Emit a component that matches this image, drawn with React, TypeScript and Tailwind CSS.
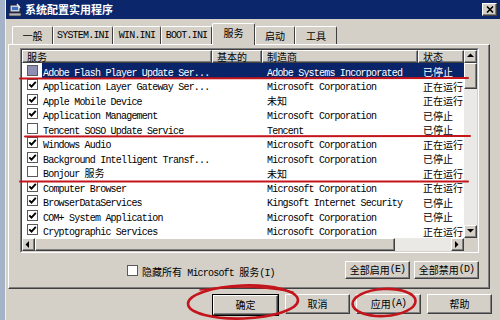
import React from "react";

const services = [
  { name: "Adobe Flash Player Update Ser...", maker: "Adobe Systems Incorporated", state: "已停止", on: false, sel: true },
  { name: "Application Layer Gateway Ser...", maker: "Microsoft Corporation", state: "正在运行", on: true },
  { name: "Apple Mobile Device", maker: "未知", state: "正在运行", on: true },
  { name: "Application Management", maker: "Microsoft Corporation", state: "已停止", on: true },
  { name: "Tencent SOSO Update Service", maker: "Tencent", state: "已停止", on: false },
  { name: "Windows Audio", maker: "Microsoft Corporation", state: "正在运行", on: true },
  { name: "Background Intelligent Transf...", maker: "Microsoft Corporation", state: "已停止", on: true },
  { name: "Bonjour 服务", maker: "未知", state: "正在运行", on: false },
  { name: "Computer Browser", maker: "Microsoft Corporation", state: "正在运行", on: true },
  { name: "BrowserDataServices", maker: "Kingsoft Internet Security", state: "已停止", on: true },
  { name: "COM+ System Application", maker: "Microsoft Corporation", state: "已停止", on: true },
  { name: "Cryptographic Services", maker: "Microsoft Corporation", state: "正在运行", on: true },
];

const tabs = [
  { label: "一般", w: "w-[41px]" },
  { label: "SYSTEM.INI", w: "w-[60px]" },
  { label: "WIN.INI", w: "w-[48px]" },
  { label: "BOOT.INI", w: "w-[51px]" },
  { label: "服务", w: "w-[43px]", active: true },
  { label: "启动", w: "w-[40px]" },
  { label: "工具", w: "w-[42px]" },
];

const CJK = /[\u2E80-\u9FFF\uFF00-\uFFEF]/;

// split text into latin / chinese runs so each gets its own font
function runs(s: string) {
  const out: { t: string; c: boolean }[] = [];
  for (const ch of s) {
    const c = CJK.test(ch);
    const last = out[out.length - 1];
    if (last && last.c === c) last.t += ch;
    else out.push({ t: ch, c });
  }
  return out;
}

function Txt({ s }: { s: string }) {
  return (
    <>
      {runs(s).map((r, i) =>
        r.c ? (
          <span key={i} className="font-['Noto_Sans_CJK_SC',sans-serif] text-[10px]">{r.t}</span>
        ) : (
          <span key={i} className="font-['Liberation_Mono',monospace] text-[10px] tracking-[-0.8px] whitespace-pre">{r.t}</span>
        )
      )}
    </>
  );
}

function Check({ on, sel }: { on?: boolean; sel?: boolean }) {
  return (
    <span className={`flex h-[11px] w-[11px] shrink-0 items-center justify-center border border-[#5a5a5a] ${sel ? "bg-[#8e8fb3]" : "bg-white"}`}>
      {on && (
        <svg width="9" height="9" viewBox="0 0 9 9">
          <path d="M1.3 4.3 L3.5 6.6 L7.8 1.8" stroke="#000" strokeWidth="1.9" fill="none" />
        </svg>
      )}
    </span>
  );
}

const raised = "border border-t-white border-l-white border-r-[#404040] border-b-[#404040] shadow-[inset_-1px_-1px_0_#808080]";

function Arrow({ dir }: { dir: "up" | "down" | "left" | "right" }) {
  const pts = { up: "1,5 4.5,1.5 8,5", down: "1,2 4.5,5.5 8,2", left: "5,1 1.5,4.5 5,8", right: "2,1 5.5,4.5 2,8" }[dir];
  return (
    <div className={`flex h-[13px] w-[13px] shrink-0 items-center justify-center bg-[#d4d0c8] ${raised}`}>
      <svg width="9" height="9" viewBox="0 0 9 9">
        <polygon points={pts} fill="#000" />
      </svg>
    </div>
  );
}

function Button({ label, def }: { label: string; def?: boolean }) {
  return (
    <div className={def ? "border border-black" : ""}>
      <div className={`flex h-[20px] w-[65px] items-center justify-center bg-[#d4d0c8] text-black ${raised} ${def ? "h-[18px] w-[63px]" : ""}`}>
        <Txt s={label} />
      </div>
    </div>
  );
}

export default function App() {
  return (
    <div className="relative flex h-[320px] w-[500px] overflow-hidden bg-[#d4d0c8] text-black">
      <div className="w-[5px] shrink-0 bg-[#a5b3c8]" />
      <div className="flex flex-1 flex-col border-l border-l-[#eef0f2]">
        {/* title bar */}
        <div className="flex h-[19px] items-center bg-[#0b266b] pr-[3px]">
          <svg width="14" height="14" viewBox="0 0 14 14" className="ml-[2px]">
            <rect x="2" y="2" width="10" height="7" fill="#c8d0dc" stroke="#223" strokeWidth="1" />
            <rect x="4" y="4" width="6" height="3" fill="#3a6fc4" />
            <rect x="1" y="10" width="12" height="3" fill="#b8b8b8" stroke="#333" strokeWidth="0.8" />
            <path d="M9 1 L12 5" stroke="#e9e9e9" strokeWidth="1.4" />
          </svg>
          <span className="ml-[3px] font-['Noto_Sans_CJK_SC',sans-serif] text-[11px] font-bold leading-none text-white">系统配置实用程序</span>
          <div className={`ml-auto flex h-[13px] w-[15px] items-center justify-center bg-[#d4d0c8] ${raised}`}>
            <svg width="8" height="7" viewBox="0 0 8 7">
              <path d="M1 0.5 L7 6.5 M7 0.5 L1 6.5" stroke="#000" strokeWidth="1.6" />
            </svg>
          </div>
        </div>

        {/* tabs */}
        <div className="ml-[6px] mt-[4px] flex h-[21px] items-end">
          {tabs.map((t) => (
            <div
              key={t.label}
              className={`flex items-center justify-center rounded-t-[2px] border-l border-t border-r border-l-white border-t-white border-r-[#404040] bg-[#d4d0c8] leading-none ${t.w} ${t.active ? "relative z-10 -mb-px h-[22px] pb-[3px]" : "h-[18px]"}`}
            >
              <Txt s={t.label} />
            </div>
          ))}
        </div>

        {/* panel */}
        <div className="ml-[2px] mr-[10px] flex h-[245px] flex-col border border-t-white border-l-white border-r-[#404040] border-b-[#404040] shadow-[inset_-1px_-1px_0_#808080]">
          <div className="ml-[11px] mr-[10px] mt-[3px] h-[205px] border border-t-[#808080] border-l-[#808080] border-b-white border-r-white">
            <div className="flex h-full flex-col border border-t-[#404040] border-l-[#404040] border-b-[#d4d0c8] border-r-[#d4d0c8] bg-white">
              <div className="flex flex-1 overflow-hidden">
                <div className="flex flex-1 flex-col overflow-hidden">
                  <div className="flex h-[13px] shrink-0 leading-none">
                    {[["服务", "w-[190px]"], ["基本的", "w-[50px]"], ["制造商", "w-[156px]"], ["状态", "flex-1"]].map(([h, w]) => (
                      <div key={h} className={`flex items-center bg-[#d4d0c8] pl-[4px] ${w} ${raised}`}>
                        <Txt s={h} />
                      </div>
                    ))}
                  </div>
                  {services.map((s) => (
                    <div key={s.name} className="flex h-[14.5px] shrink-0 items-center leading-none">
                      <div className="flex w-[20px] shrink-0 pl-[5px]">
                        <Check on={s.on} sel={s.sel} />
                      </div>
                      <div className={`flex h-full flex-1 items-center ${s.sel ? "bg-[#0a246a] text-white" : ""}`}>
                        <div className="w-[170px] shrink-0 overflow-hidden whitespace-nowrap pl-px"><Txt s={s.name} /></div>
                        <div className="w-[50px] shrink-0" />
                        <div className="w-[156px] shrink-0 overflow-hidden whitespace-nowrap pl-[5px]"><Txt s={s.maker} /></div>
                        <div className="flex-1 whitespace-nowrap pl-[5px]"><Txt s={s.state} /></div>
                      </div>
                    </div>
                  ))}
                </div>
                {/* vertical scrollbar */}
                <div className="flex w-[13px] shrink-0 flex-col bg-[#ebe9e5]">
                  <Arrow dir="up" />
                  <div className={`h-[26px] shrink-0 bg-[#d4d0c8] ${raised}`} />
                  <div className="flex-1" />
                  <Arrow dir="down" />
                </div>
              </div>
              {/* horizontal scrollbar */}
              <div className="flex h-[13px] shrink-0 bg-[#ebe9e5]">
                <Arrow dir="left" />
                <div className={`w-[360px] shrink-0 bg-[#d4d0c8] ${raised}`} />
                <div className="flex-1" />
                <Arrow dir="right" />
                <div className="w-[13px] shrink-0 bg-[#d4d0c8]" />
              </div>
            </div>
          </div>

          <div className="mr-[10px] mt-[8px] flex h-[18px] items-center">
            <div className="ml-[118px] flex items-center gap-[4px] leading-none">
              <Check />
              <span><Txt s="隐藏所有 Microsoft 服务(I)" /></span>
            </div>
            <div className="ml-auto flex gap-[4px] leading-none">
              <div className={`flex h-[18px] w-[65px] items-center justify-center ${raised}`}><Txt s="全部启用(E)" /></div>
              <div className={`flex h-[18px] w-[65px] items-center justify-center ${raised}`}><Txt s="全部禁用(D)" /></div>
            </div>
          </div>
        </div>

        {/* dialog buttons */}
        <div className="mr-[8px] mt-[5px] flex justify-end gap-[6px] leading-none">
          <Button label="确定" def />
          <Button label="取消" />
          <Button label="应用(A)" />
          <Button label="帮助" />
        </div>
      </div>

      {/* red hand-drawn annotations */}
      <svg className="pointer-events-none absolute left-0 top-0" width="500" height="320" viewBox="0 0 500 320">
        <g stroke="#c4141c" strokeWidth="2" fill="none" strokeLinecap="round">
          <path d="M20 78.5 L468 78" />
          <path d="M25 136.5 Q250 135.5 470 136" />
          <path d="M20 181.5 Q250 180.5 468 181.5" />
          <ellipse cx="243" cy="302" rx="55" ry="16.5" transform="rotate(-2 243 302)" strokeWidth="2.6" />
          <path d="M200 290 Q245 283 293 292" strokeWidth="1.5" />
          <ellipse cx="384" cy="302.5" rx="31.5" ry="13.5" transform="rotate(-3 384 302)" strokeWidth="2.6" />
        </g>
      </svg>
    </div>
  );
}
